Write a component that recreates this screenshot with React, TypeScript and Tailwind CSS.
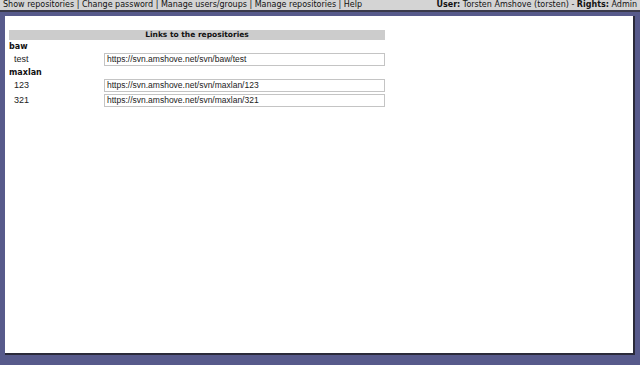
export default function App() {
  const groups = [
    { name: "baw", repos: [{ label: "test", url: "https://svn.amshove.net/svn/baw/test" }] },
    {
      name: "maxlan",
      repos: [
        { label: "123", url: "https://svn.amshove.net/svn/maxlan/123" },
        { label: "321", url: "https://svn.amshove.net/svn/maxlan/321" },
      ],
    },
  ];

  return (
    <div className="flex h-[365px] w-[640px] flex-col bg-[#575a8b] font-['DejaVu_Sans',sans-serif] text-[8px] text-[#111]">
      {/* top menu bar */}
      <div className="flex h-[12px] items-center justify-between border-b-2 border-[#3a3a4a] bg-[#d4d4d4] px-[3px] leading-none">
        <span>Show repositories | Change password | Manage users/groups | Manage repositories | Help</span>
        <span>
          <b>User:</b> Torsten Amshove (torsten) - <b>Rights:</b> Admin
        </span>
      </div>

      {/* content panel */}
      <div className="mx-[5px] mt-[4px] h-[339px] border-r-2 border-b-2 border-[#2a2a3a] bg-white px-[4px] pt-[14px]">
        <div className="w-[376px]">
          <div className="flex h-[10px] items-center justify-center bg-[#cccccc] text-[7.5px] font-bold leading-none">
            Links to the repositories
          </div>
          {groups.map((g) => (
            <div key={g.name}>
              <div className="flex h-[13px] items-end pb-[2px] text-[8px] font-bold leading-none">{g.name}</div>
              {g.repos.map((r, i) => (
                <div key={r.label} className={`flex h-[13px] items-center ${i > 0 ? "mt-[2px]" : ""}`}>
                  <span className="w-[95px] pl-[5px] font-['Liberation_Sans',sans-serif] text-[9px] text-[#222]">
                    {r.label}
                  </span>
                  <div className="flex h-[13px] flex-1 items-center border border-[#c4c4c4] px-[2px] font-['Liberation_Sans',sans-serif] text-[8.5px] leading-none text-[#222]">
                    {r.url}
                  </div>
                </div>
              ))}
            </div>
          ))}
        </div>
      </div>
    </div>
  );
}
